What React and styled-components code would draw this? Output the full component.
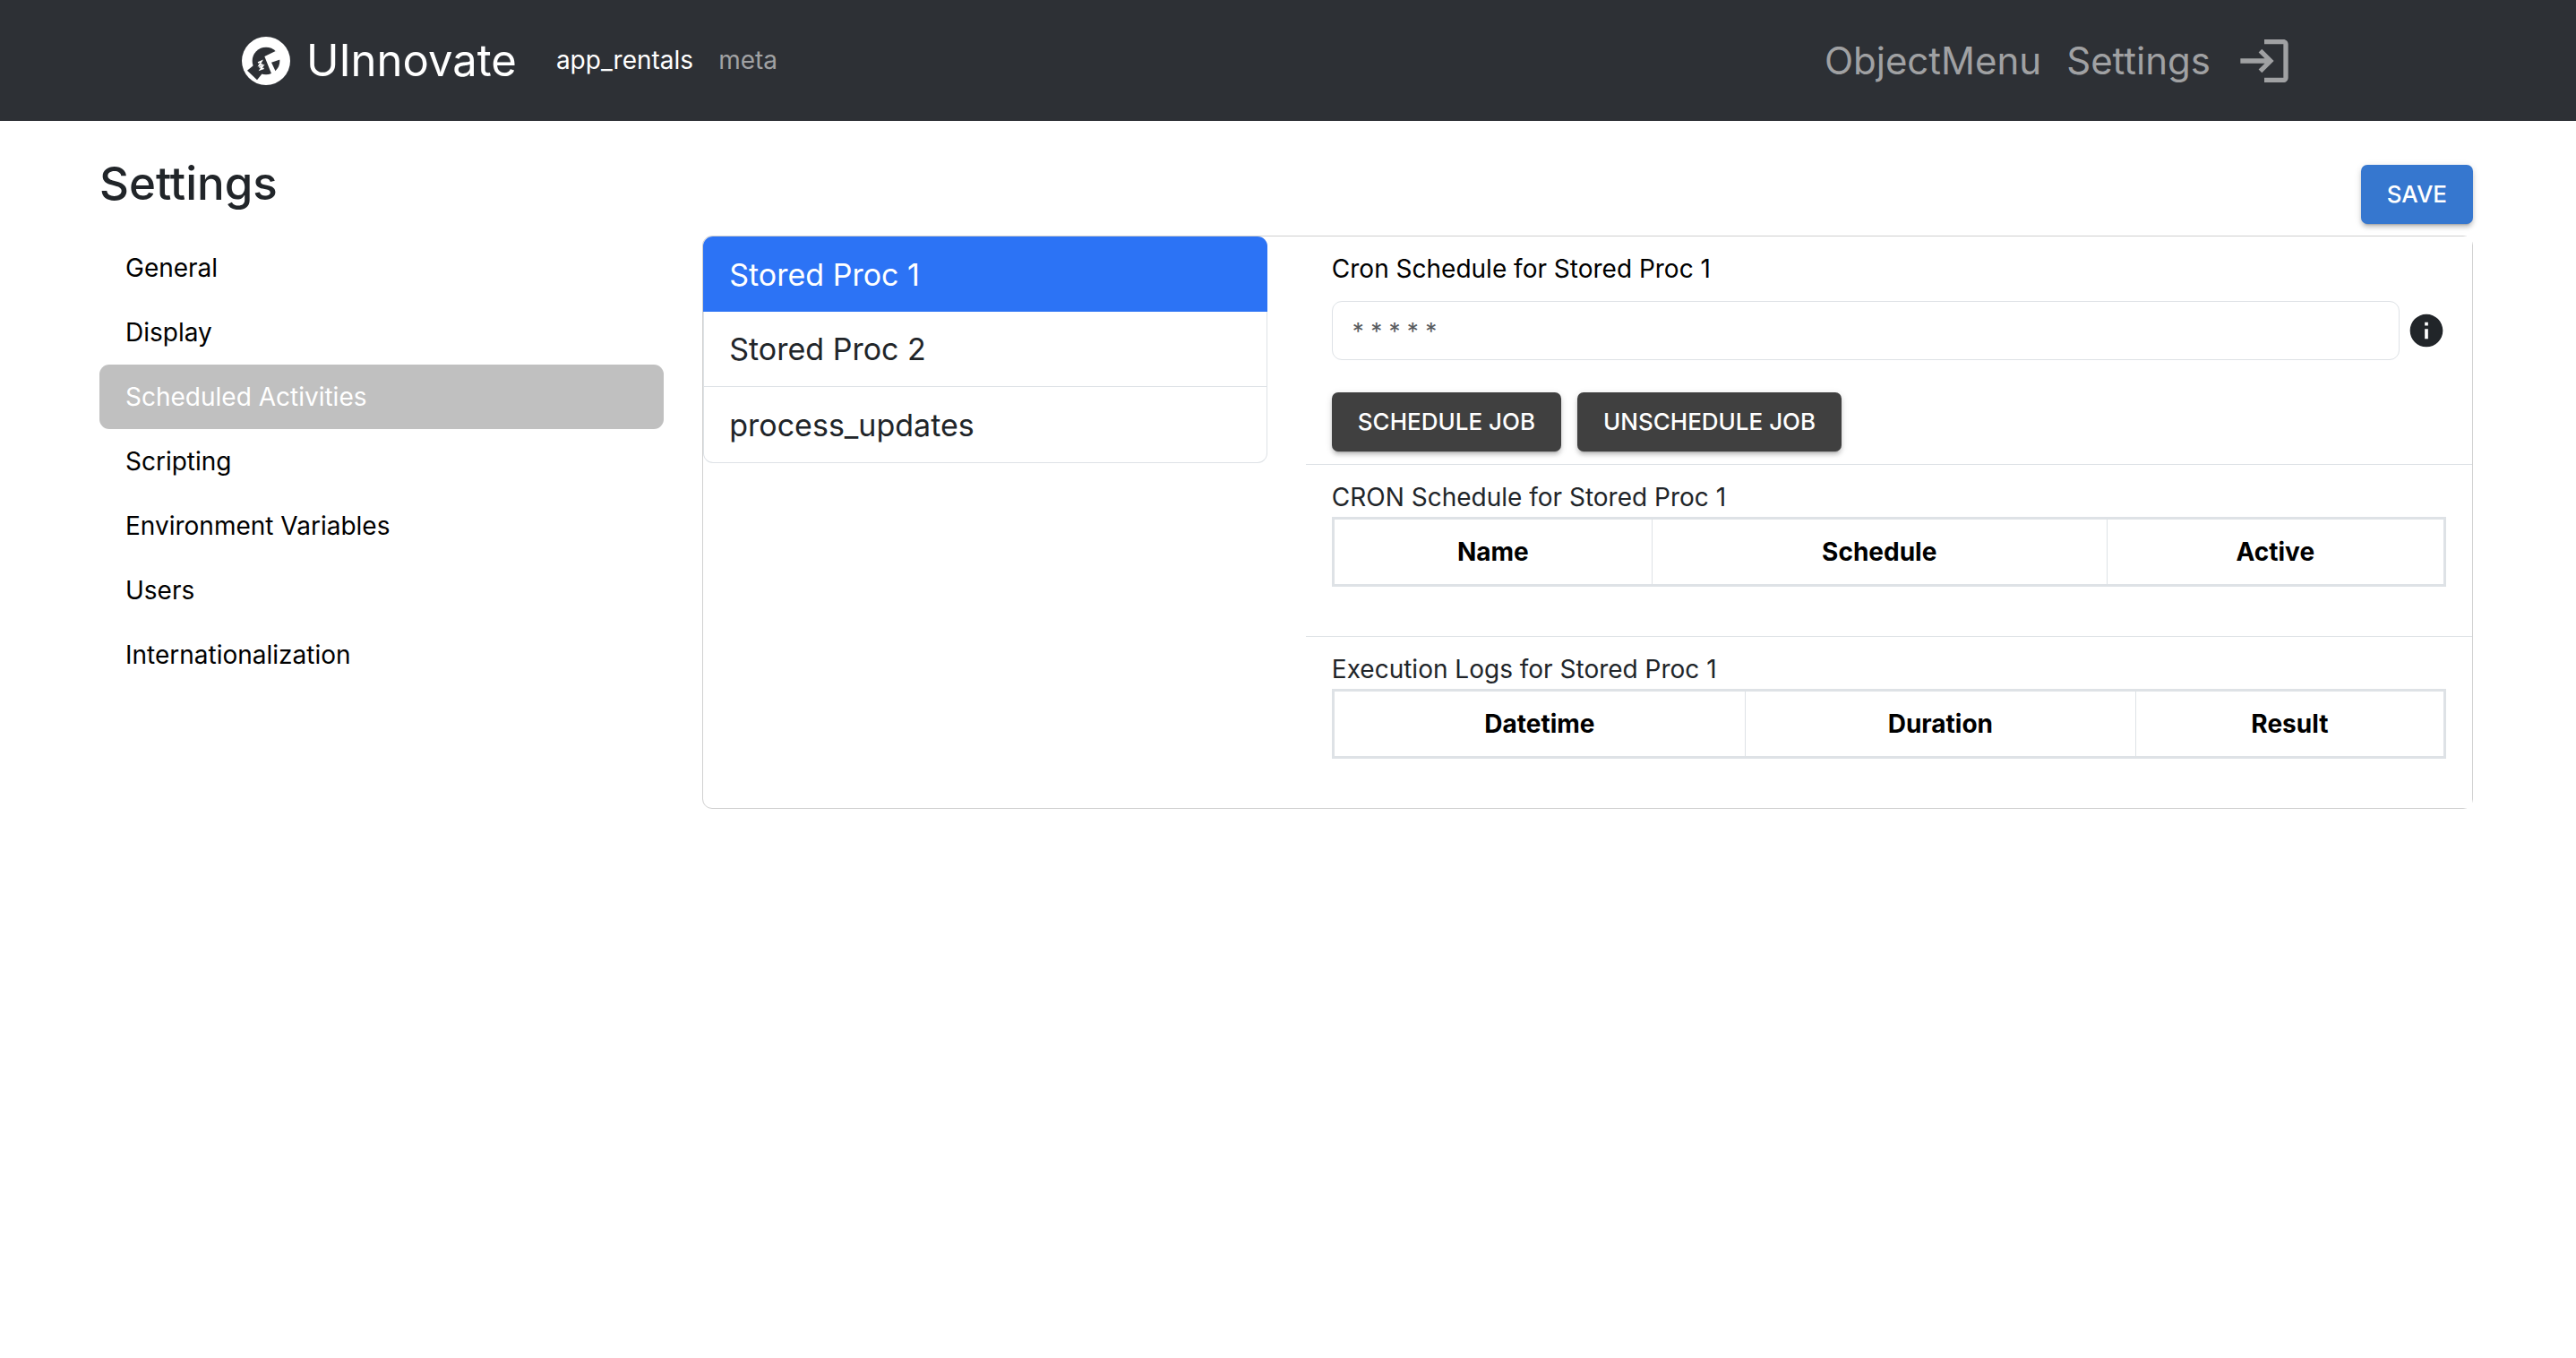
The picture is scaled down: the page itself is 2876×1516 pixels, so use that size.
import React, { useState } from "react";
import styled, { createGlobalStyle } from "styled-components";

const GlobalStyle = createGlobalStyle`
  *, *::before, *::after { box-sizing: border-box; }
  body {
    margin: 0;
    background: #fff;
    color: #212529;
    font-family: Inter, "Liberation Sans", sans-serif;
    font-size: 28px;
    line-height: 43px;
  }
  button, input { font-family: inherit; }
`;

const Navbar = styled.header`
  background: #2d3035;
`;

const NavInner = styled.div`
  display: flex;
  align-items: center;
  max-width: 2376px;
  min-height: 135px;
  margin: 0 auto;
  padding: 0 66px 0 20px;
`;

const Brand = styled.a`
  display: flex;
  align-items: center;
  gap: 18px;
  margin-right: 44px;
  color: #fff;
  font-size: 49px;
  line-height: 64px;
  text-decoration: none;
`;

const NavGroup = styled.nav`
  display: flex;
  align-items: center;
  gap: 28px;
  margin-left: ${(p) => (p.$end ? "auto" : "0")};
`;

const NavLink = styled.a`
  display: flex;
  color: ${(p) => (p.$active ? "#fff" : "#a0a1a3")};
  font-size: ${(p) => (p.$large ? "42px" : "28px")};
  text-decoration: none;
`;

const Page = styled.main`
  padding: 0 115px 0 111px;
`;

const PageHeader = styled.div`
  display: flex;
  justify-content: space-between;
  align-items: flex-start;
  padding: 49px 0 13px;
`;

const Title = styled.h1`
  margin: 0;
  font-size: 51px;
  line-height: 42px;
  font-weight: 500;
`;

const Button = styled.button`
  height: 66px;
  padding: 0 29px;
  border: 0;
  border-radius: 7px;
  background: ${(p) => (p.$primary ? "#3677cf" : "#404040")};
  color: #fff;
  font-size: 26px;
  font-weight: 500;
  line-height: 44px;
  text-transform: uppercase;
  cursor: pointer;
  box-shadow: 0 5px 2px -4px rgba(0, 0, 0, 0.2), 0 4px 4px rgba(0, 0, 0, 0.14),
    0 2px 9px rgba(0, 0, 0, 0.12);
`;

const Columns = styled.div`
  display: grid;
  grid-template-columns: repeat(12, minmax(0, 1fr));
  column-gap: 43px;
  align-items: start;
`;

const SideNav = styled.nav`
  grid-column: span 3;
  display: flex;
  flex-direction: column;
`;

const SideLink = styled.a`
  padding: 15px 29px 14px;
  border-radius: 11px;
  background: ${(p) => (p.$active ? "#c0c0c0" : "transparent")};
  color: ${(p) => (p.$active ? "#fff" : "#000")};
  text-decoration: none;
`;

const Card = styled(Columns)`
  grid-column: span 9;
  border: 1px solid #d0d0d0;
  border-radius: 11px;
`;

const ProcList = styled.div`
  grid-column: span 4;
  display: flex;
  flex-direction: column;
  border: 1px solid #dee2e6;
  border-top: 0;
  border-radius: 11px;
`;

const ProcItem = styled.button`
  height: 84px;
  margin: ${(p) => (p.$active ? "0 -1px" : "0")};
  padding: 0 ${(p) => (p.$active ? "29px" : "28px")};
  border: 0;
  border-bottom: ${(p) => (p.$active ? "0" : "1px solid #dee2e6")};
  background: ${(p) => (p.$active ? "#2c73f5" : "transparent")};
  color: ${(p) => (p.$active ? "#fff" : "#212529")};
  font-size: 34px;
  text-align: left;
  cursor: pointer;

  &:first-child { border-radius: 11px 11px 0 0; }
  &:last-child { border-bottom: 0; }
`;

const Details = styled.div`
  grid-column: span 8;
  background: #fff;
`;

const Section = styled.section`
  padding: ${(p) => (p.$form ? "15px 29px 14px" : "15px 29px 55px")};
  border-top: ${(p) => (p.$form ? "0" : "1px solid #dee2e6")};
`;

const Label = styled.label`
  display: block;
  margin-bottom: 14px;
  color: #000;
`;

const InputRow = styled.div`
  display: flex;
  align-items: center;
  gap: 8px;
  margin-bottom: 36px;
`;

const CronInput = styled.input`
  flex: 1;
  min-width: 0;
  height: 66px;
  padding: 0 22px;
  border: 1px solid #dee2e6;
  border-radius: 11px;
  background: #fff;
  color: #212529;
  font-size: 26px;

  &::placeholder { color: #595c5f; opacity: 1; }
`;

const ButtonRow = styled.div`
  display: flex;
  gap: 18px;
`;

const SectionTitle = styled.div`
  color: #212529;
`;

const Table = styled.table`
  width: 100%;
  table-layout: fixed;
  border: 3px solid #dee2e6;
  border-spacing: 0;

  th {
    height: 72px;
    padding: 0;
    color: #000;
    font-weight: 700;
    text-align: center;
  }
  th + th { border-left: 1px solid #dee2e6; }
`;

const HeadCell = styled.th`
  width: ${(p) => p.$width};
`;

const Logo = () => (
  <svg width="54" height="54" viewBox="0 0 162 162" aria-hidden="true">
    <circle cx="81" cy="81" r="81" fill="#fff" />
    <circle cx="81" cy="81" r="46" fill="#2d3035" />
    <path d="M18 113 40 95 68 124 51 145Z" fill="#2d3035" />
    <path d="M76 66 113 48 136 54 130 76 99 86 114 118 108 134 100 126Z" fill="#fff" />
    <path
      d="M54 87 66 82 58 96 70 92M58 103 70 98 62 110 74 106"
      fill="none"
      stroke="#fff"
      strokeWidth="5"
    />
  </svg>
);

const LoginIcon = () => (
  <svg width="64" height="64" viewBox="0 0 24 24" fill="currentColor" aria-hidden="true">
    <path d="M11 7 9.6 8.4l2.6 2.6H2v2h10.2l-2.6 2.6L11 17l5-5zm9 12h-8v2h8c1.1 0 2-.9 2-2V5c0-1.1-.9-2-2-2h-8v2h8z" />
  </svg>
);

const InfoIcon = () => (
  <svg width="44" height="44" viewBox="0 0 24 24" fill="#212529" role="img" aria-label="Cron help">
    <path d="M12 2C6.48 2 2 6.48 2 12s4.48 10 10 10 10-4.48 10-10S17.52 2 12 2m1 15h-2v-6h2zm0-8h-2V7h2z" />
  </svg>
);

const settingsPages = [
  "General",
  "Display",
  "Scheduled Activities",
  "Scripting",
  "Environment Variables",
  "Users",
  "Internationalization",
];

const procedures = ["Stored Proc 1", "Stored Proc 2", "process_updates"];

const scheduleColumns = [
  { name: "Name", width: "28.6%" },
  { name: "Schedule", width: "41%" },
  { name: "Active", width: "30.4%" },
];

const logColumns = [
  { name: "Datetime", width: "37%" },
  { name: "Duration", width: "35.2%" },
  { name: "Result", width: "27.8%" },
];

const HeaderTable = ({ columns }) => (
  <Table>
    <thead>
      <tr>
        {columns.map((c) => (
          <HeadCell key={c.name} scope="col" $width={c.width}>
            {c.name}
          </HeadCell>
        ))}
      </tr>
    </thead>
  </Table>
);

export default function App() {
  const [proc, setProc] = useState(procedures[0]);
  const [cron, setCron] = useState("");

  return (
    <>
      <GlobalStyle />
      <Navbar>
        <NavInner>
          <Brand href="#">
            <Logo />
            UInnovate
          </Brand>
          <NavGroup aria-label="Schemas">
            <NavLink href="#app_rentals" $active>
              app_rentals
            </NavLink>
            <NavLink href="#meta">meta</NavLink>
          </NavGroup>
          <NavGroup $end aria-label="Main">
            <NavLink href="#objectmenu" $large>
              ObjectMenu
            </NavLink>
            <NavLink href="#settings" $large>
              Settings
            </NavLink>
            <NavLink href="#login" aria-label="Log in">
              <LoginIcon />
            </NavLink>
          </NavGroup>
        </NavInner>
      </Navbar>
      <Page>
        <PageHeader>
          <Title>Settings</Title>
          <Button type="button" $primary>
            Save
          </Button>
        </PageHeader>
        <Columns>
          <SideNav aria-label="Settings">
            {settingsPages.map((name) => (
              <SideLink key={name} href="#" $active={name === "Scheduled Activities"}>
                {name}
              </SideLink>
            ))}
          </SideNav>
          <Card>
            <ProcList>
              {procedures.map((name) => (
                <ProcItem
                  key={name}
                  type="button"
                  $active={name === proc}
                  onClick={() => setProc(name)}
                >
                  {name}
                </ProcItem>
              ))}
            </ProcList>
            <Details>
              <Section $form>
                <Label htmlFor="cron">Cron Schedule for {proc}</Label>
                <InputRow>
                  <CronInput
                    id="cron"
                    type="text"
                    placeholder="* * * * *"
                    value={cron}
                    onChange={(e) => setCron(e.target.value)}
                  />
                  <InfoIcon />
                </InputRow>
                <ButtonRow>
                  <Button type="button">Schedule Job</Button>
                  <Button type="button">Unschedule Job</Button>
                </ButtonRow>
              </Section>
              <Section>
                <SectionTitle>CRON Schedule for {proc}</SectionTitle>
                <HeaderTable columns={scheduleColumns} />
              </Section>
              <Section>
                <SectionTitle>Execution Logs for {proc}</SectionTitle>
                <HeaderTable columns={logColumns} />
              </Section>
            </Details>
          </Card>
        </Columns>
      </Page>
    </>
  );
}
